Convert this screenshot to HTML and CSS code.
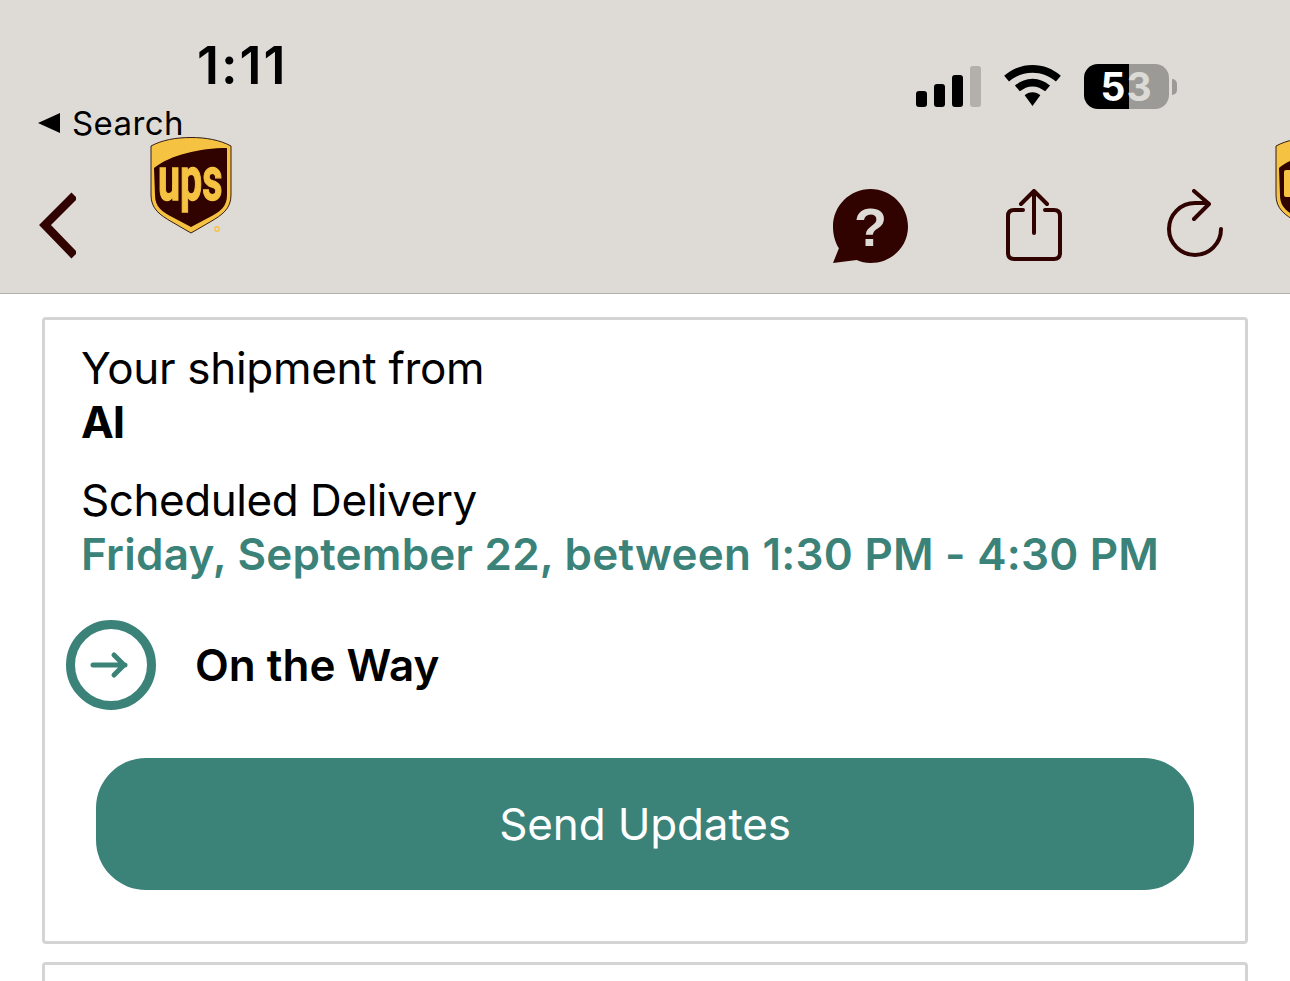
FILE: index.html
```html
<!DOCTYPE html>
<html lang="en">
<head>
<meta charset="utf-8">
<title>UPS shipment</title>
<link rel="stylesheet" href="styles.css">
</head>
<body>
<header class="top">
  <div class="status">
    <div class="status-left">
      <div class="time">1:11</div>
      <div class="crumb"><span class="crumb-arrow"></span><span>Search</span></div>
    </div>
    <div class="status-right">
      <div class="signal"><i class="b1"></i><i class="b2"></i><i class="b3"></i><i class="b4"></i></div>
      <svg class="wifi" width="57" height="42" viewBox="0 0 58 43"><path d="M29 0C40 0 50 4 58 11L53 17C46 11 38 8 29 8S12 11 5 17L0 11C8 4 18 0 29 0ZM29 14C36 14 42 17 47 21L42 27C38 24 34 22 29 22S20 24 16 27L11 21C16 17 22 14 29 14ZM29 28C32 28 35 29 37 31L29 42 21 31C23 29 26 28 29 28Z" fill="#000"/></svg>
      <div class="battery"><div class="battery-body"><span class="battery-num">5<span class="battery-dim">3</span></span></div><span class="battery-nub"></span></div>
    </div>
  </div>
  <nav class="nav">
    <svg class="back" width="40" height="68" viewBox="0 0 40 68"><path d="M38.5 4.5 9 34 38.5 64.5" fill="none" stroke="#300200" stroke-width="8.5"/></svg>
    <svg class="logo" width="82" height="98" viewBox="0 0 82 98">
      <path d="M41 .5C56 .5 70 3 81 9V58C81 72 72 78 60 85L41 96 22 85C10 78 1 72 1 58V9C12 3 26 .5 41 .5Z" fill="#f5c242" stroke="#351c15"/>
      <path d="M4 31C20 18 50 11 77 11V58C77 70 70 75 58 81L41 90 24 81C12 75 5 70 5 58Z" fill="#300200"/>
      <text transform="translate(8 63) scale(.68 1.05)" font-family="Roboto, sans-serif" font-weight="700" font-size="58" fill="#f5c242" stroke="#f5c242" stroke-width="1.2">ups</text>
      <circle cx="67" cy="92" r="2.2" fill="none" stroke="#f5c242" stroke-width="1.4"/>
    </svg>
    <div class="actions">
      <div class="help">
        <svg width="75" height="75" viewBox="0 0 76 76"><path d="M38 0C59 0 76 17 76 38S59 75 38 75C33 75 28 74 24 72L0 75 6 60C2 54 0 46 0 38 0 17 17 0 38 0Z" fill="#300200"/></svg>
        <span class="help-mark">?</span>
      </div>
      <svg class="share" width="56" height="74" viewBox="0 0 56 74"><path d="M17 21H8Q2 21 2 27V64Q2 70 8 70H48Q54 70 54 64V27Q54 21 48 21H39M28 2V44M15 15 28 2 41 15" fill="none" stroke="#300200" stroke-width="4" stroke-linecap="round" stroke-linejoin="round"/></svg>
      <svg class="reload" width="60" height="72" viewBox="0 0 60 72"><path d="M56 40A26 26 0 1 1 30 14H43M29 2 44 15 29 30" fill="none" stroke="#300200" stroke-width="4" stroke-linecap="round" stroke-linejoin="round"/></svg>
      <svg class="logo-next" width="82" height="98" viewBox="0 0 82 98">
        <path d="M41 .5C56 .5 70 3 81 9V58C81 72 72 78 60 85L41 96 22 85C10 78 1 72 1 58V9C12 3 26 .5 41 .5Z" fill="#f5c242" stroke="#351c15"/>
        <path d="M4 31C20 18 50 11 77 11V58C77 70 70 75 58 81L41 90 24 81C12 75 5 70 5 58Z" fill="#300200"/>
        <rect x="9" y="33" width="10" height="27" rx="2" fill="#f5c242"/>
      </svg>
    </div>
  </nav>
</header>
<main class="content">
  <section class="card">
    <p class="line">Your shipment from</p>
    <p class="line strong">AI</p>
    <p class="line label">Scheduled Delivery</p>
    <p class="line when">Friday, September 22, between 1:30 PM - 4:30 PM</p>
    <div class="state">
      <svg width="90" height="90" viewBox="0 0 90 90"><circle cx="45" cy="45" r="40.5" fill="#fff" stroke="#3b8279" stroke-width="9"/><path d="M27 45H59M48 35 58 45 48 55" fill="none" stroke="#3b8279" stroke-width="5" stroke-linecap="round" stroke-linejoin="round"/></svg>
      <span class="state-text">On the Way</span>
    </div>
    <button class="cta" type="button">Send Updates</button>
  </section>
  <section class="card next"></section>
</main>
</body>
</html>
```
FILE: styles.css
```css
* { box-sizing: border-box; }
html, body { margin: 0; padding: 0; height: 981px; overflow: hidden; background: #fff; }
body { font-family: Inter, "Noto Sans", sans-serif; color: #000; }
p { margin: 0; }

.top { height: 294px; background: #dedbd7; border-bottom: 1px solid #b5b3b0; overflow: hidden; }

.status { display: flex; justify-content: space-between; height: 137px; padding: 0 113px 0 38px; }
.status-left { display: flex; flex-direction: column; }
.time { margin: 36px 0 0 159px; font-size: 52px; line-height: 60px; font-weight: 600; letter-spacing: 2px; }
.crumb { display: flex; align-items: center; gap: 12px; height: 36px; margin-top: 9px; font-size: 33px; line-height: 36px; letter-spacing: .4px; }
.crumb-arrow { width: 0; height: 0; border-top: 10px solid transparent; border-bottom: 10px solid transparent; border-right: 22px solid #000; }

.status-right { display: flex; align-items: flex-end; gap: 23px; height: 109px; }
.signal { display: flex; align-items: flex-end; gap: 7px; margin-bottom: 2px; }
.signal i { display: block; width: 11px; border-radius: 3px; background: #000; }
.signal .b1 { height: 16px; }
.signal .b2 { height: 23px; }
.signal .b3 { height: 32px; }
.signal .b4 { height: 41px; background: #b3b0ac; }
.wifi { margin-bottom: 2px; }
.battery { display: flex; align-items: center; gap: 3px; }
.battery-body { width: 85px; height: 45px; border-radius: 14px; display: flex; align-items: center; justify-content: center; background: linear-gradient(90deg, #000 53%, #9b9a96 53%); }
.battery-num { font-size: 39px; line-height: 45px; font-weight: 700; letter-spacing: 1px; color: #fff; }
.battery-dim { color: #dcdad6; }
.battery-nub { width: 5px; height: 16px; border-radius: 0 8px 8px 0; background: #9b9a96; }

.nav { display: flex; align-items: flex-start; }
.back { margin: 54px 0 0 36px; }
.logo { margin-left: 74px; }
.actions { display: flex; align-items: flex-start; margin-left: auto; }
.help { position: relative; width: 75px; height: 75px; margin-top: 52px; }
.help svg { display: block; }
.help-mark { position: absolute; inset: 0; text-align: center; font-family: "Liberation Sans", sans-serif; font-size: 54px; line-height: 77px; font-weight: 700; color: #dedbd7; }
.share { margin: 52px 0 0 98px; }
.reload { margin: 52px 0 0 103px; }
.logo-next { margin: 0 -67px 0 50px; }

.content { height: 687px; padding: 23px 42px 0; overflow: hidden; }
.card { height: 627px; padding: 21px 36px 0; border: 3px solid #d4d4d4; border-radius: 4px; background: #fff; }
.card.next { margin-top: 18px; height: 19px; border-bottom: 0; border-radius: 4px 4px 0 0; }
.line { font-size: 44px; line-height: 54px; letter-spacing: -.3px; }
.strong { font-weight: 700; letter-spacing: -1px; }
.label { margin-top: 24px; letter-spacing: -.45px; }
.when { font-weight: 600; color: #3b8279; white-space: nowrap; letter-spacing: .23px; }
.state { display: flex; align-items: center; gap: 39px; margin: 39px 0 0 -15px; }
.state svg { display: block; }
.state-text { font-size: 44px; font-weight: 600; }
.cta { display: block; width: 1098px; height: 132px; margin: 48px 0 0 15px; border: 0; border-radius: 50px; background: #3b8279; color: #fff; font-family: inherit; font-size: 44px; letter-spacing: -.15px; }
```
